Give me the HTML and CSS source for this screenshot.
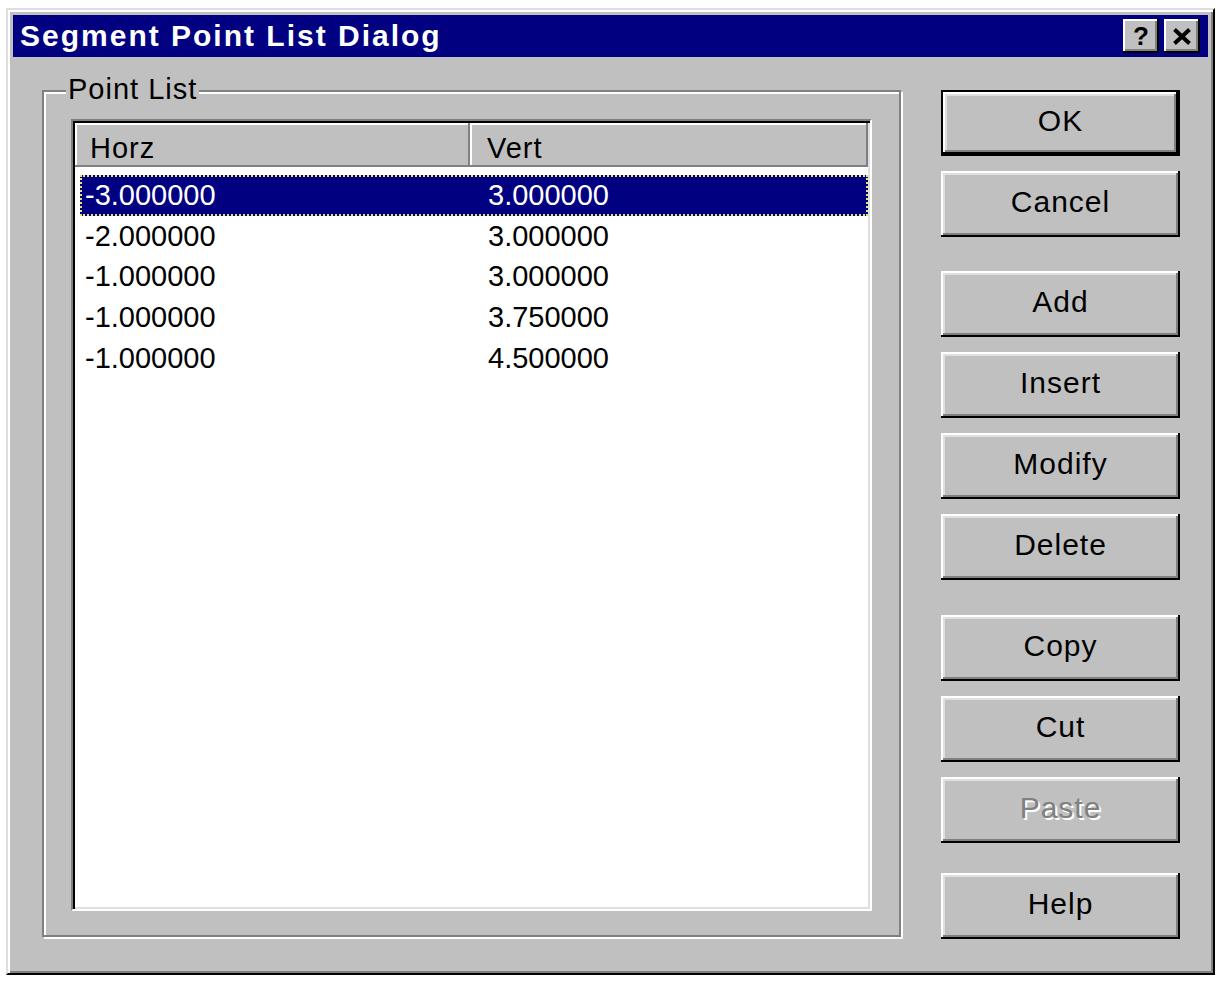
FILE: index.html
```html
<!DOCTYPE html>
<html>
<head>
<meta charset="utf-8">
<title>Segment Point List Dialog</title>
<link rel="stylesheet" href="styles.css">
</head>
<body>
<div class="window">
  <div class="titlebar">
    <span class="title">Segment Point List Dialog</span>
    <div class="caption-buttons">
      <div class="cap-btn cap-help">?</div>
      <div class="cap-btn cap-close">
        <svg width="18" height="17" viewBox="0 0 18 17"><path d="M1.5 1.5 L16.5 15.5 M16.5 1.5 L1.5 15.5" stroke="#000" stroke-width="4" fill="none"/></svg>
      </div>
    </div>
  </div>
  <div class="client">
    <div class="groupbox">
      <span class="group-label">Point List</span>
      <div class="listview">
        <div class="lv-header">
          <div class="hdr hdr-horz">Horz</div>
          <div class="hdr hdr-vert">Vert</div>
        </div>
        <div class="lv-rows">
          <div class="row selected"><span>-3.000000</span><span>3.000000</span></div>
          <div class="row"><span>-2.000000</span><span>3.000000</span></div>
          <div class="row"><span>-1.000000</span><span>3.000000</span></div>
          <div class="row"><span>-1.000000</span><span>3.750000</span></div>
          <div class="row"><span>-1.000000</span><span>4.500000</span></div>
        </div>
      </div>
    </div>
    <div class="buttons">
      <div class="btn-group">
        <div class="btn btn-default">OK</div>
        <div class="btn">Cancel</div>
      </div>
      <div class="btn-group group-edit">
        <div class="btn">Add</div>
        <div class="btn">Insert</div>
        <div class="btn">Modify</div>
        <div class="btn">Delete</div>
      </div>
      <div class="btn-group group-clip">
        <div class="btn">Copy</div>
        <div class="btn">Cut</div>
        <div class="btn btn-disabled">Paste</div>
      </div>
      <div class="btn-group group-help">
        <div class="btn">Help</div>
      </div>
    </div>
  </div>
</div>
</body>
</html>
```

FILE: styles.css
```css
html, body {
  margin: 0;
  padding: 0;
  background: #ffffff;
}

body {
  font-family: "Liberation Sans", Arial, sans-serif;
  color: #000;
}

.window {
  box-sizing: border-box;
  width: 1209px;
  height: 967px;
  margin: 8px 0 0 6px;
  background: #c0c0c0;
  border: 2px solid;
  border-color: #dfdfdf #000 #000 #dfdfdf;
  box-shadow: inset 2px 2px #fff, inset -2px -2px #808080;
  padding: 5px;
}

.titlebar {
  height: 42px;
  background: #000080;
  color: #fff;
  display: flex;
  align-items: center;
  justify-content: space-between;
  padding: 0 8px 0 7px;
}

.title {
  font-weight: bold;
  font-size: 30px;
  letter-spacing: 2px;
  white-space: nowrap;
}

.caption-buttons {
  display: flex;
  gap: 5px;
}

.cap-btn {
  box-sizing: border-box;
  width: 36px;
  height: 34px;
  background: #c0c0c0;
  box-shadow: inset -2px -2px #000, inset 2px 2px #fff, inset -4px -4px #808080;
  display: flex;
  align-items: center;
  justify-content: center;
  color: #000;
  font-weight: bold;
  font-size: 26px;
  line-height: 1;
}

.cap-help {
  padding-bottom: 1px;
}

.client {
  display: flex;
  gap: 40px;
  padding: 33px 0 0 29px;
}

.groupbox {
  position: relative;
  box-sizing: border-box;
  width: 859px;
  height: 847px;
  border: 2px solid #808080;
  box-shadow: inset 2px 2px #fff, 2px 2px 0 #fff;
  padding: 27px 0 0 27px;
}

.group-label {
  position: absolute;
  left: 22px;
  top: -18px;
  padding: 0 2px;
  background: #c0c0c0;
  font-size: 29px;
  letter-spacing: 1px;
  line-height: 30px;
}

.listview {
  box-sizing: border-box;
  width: 801px;
  height: 792px;
  background: #fff;
  border: 2px solid;
  border-color: #808080 #fff #fff #808080;
  padding: 2px;
  box-shadow: inset 2px 2px #000, inset -2px -2px #dfdfdf;
}

.lv-header {
  display: flex;
  height: 44px;
}

.hdr {
  box-sizing: border-box;
  height: 44px;
  background: #c0c0c0;
  box-shadow: inset -2px -2px #808080, inset 2px 2px #fff;
  font-size: 29px;
  letter-spacing: 1px;
  line-height: 38px;
  padding-top: 6px;
}

.hdr-horz {
  width: 395px;
  padding-left: 15px;
}

.hdr-vert {
  width: 398px;
  padding-left: 17px;
}

.lv-rows {
  padding: 8px 0 0 5px;
}

.row {
  box-sizing: border-box;
  width: 788px;
  height: 40.7px;
  display: grid;
  grid-template-columns: 403px 1fr;
  font-size: 29px;
  line-height: 40.7px;
  letter-spacing: 0;
  white-space: nowrap;
}

.row span {
  padding-left: 5px;
}

.row.selected {
  background: #000080;
  color: #fff;
  outline: 2px dotted #e6e66e;
  outline-offset: -2px;
}

.buttons {
  display: flex;
  flex-direction: column;
  width: 239px;
}

.btn-group {
  display: flex;
  flex-direction: column;
  gap: 15px;
}

.group-edit {
  margin-top: 34px;
}

.group-clip {
  margin-top: 35px;
}

.group-help {
  margin-top: 30px;
}

.btn {
  box-sizing: border-box;
  height: 66px;
  display: flex;
  align-items: center;
  justify-content: center;
  padding-bottom: 4px;
  font-size: 30px;
  letter-spacing: 1px;
  background: #c0c0c0;
  box-shadow: inset -2px -2px #000, inset 2px 2px #fff, inset -4px -4px #808080, inset 4px 4px #dfdfdf;
}

.btn-default {
  border: 2px solid #000;
}

.btn-disabled {
  color: #808080;
  text-shadow: 2px 2px 0 #fff;
}
```
